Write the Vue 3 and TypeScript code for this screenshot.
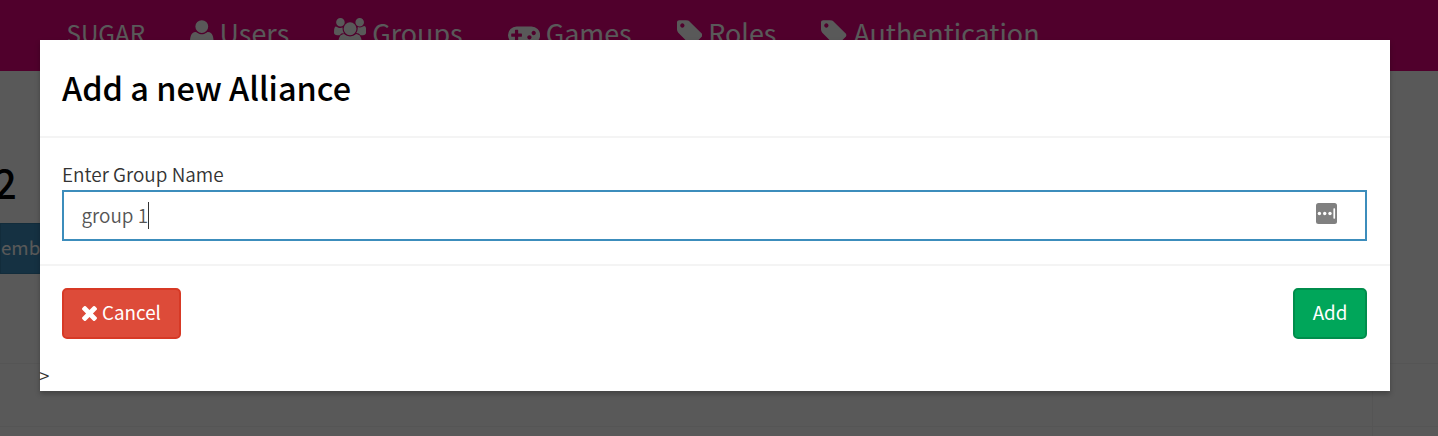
<script setup lang="ts">
import { ref } from 'vue'

interface NavItem {
  label: string
  box?: string
  width?: number
  path?: string
}

const tagPath =
  'M576 448q0-53-37.5-90.5t-90.5-37.5-90.5 37.5-37.5 90.5 37.5 90.5 90.5 37.5 90.5-37.5 37.5-90.5zm1067 576q0 53-37 90l-491 492q-39 37-91 37-53 0-90-37l-715-716q-38-37-64.5-101t-26.5-117v-416q0-52 38-90t90-38h416q53 0 117 26.5t102 64.5l715 714q37 39 37 91z'

const navItems: NavItem[] = [
  { label: 'SUGAR' },
  {
    label: 'Users',
    box: '192 0 1408 1792',
    width: 23.57,
    path: 'M1600 1405q0 120-73 189.5t-194 69.5h-874q-121 0-194-69.5t-73-189.5q0-53 3.5-103.5t14-109 26.5-108.5 43-97.5 62-81 85.5-53.5 111.5-20q9 0 42 21.5t74.5 48 108 48 133.5 21.5 133.5-21.5 108-48 74.5-48 42-21.5q61 0 111.5 20t85.5 53.5 62 81 43 97.5 26.5 108.5 14 109 3.5 103.5zm-320-893q0 159-112.5 271.5t-271.5 112.5-271.5-112.5-112.5-271.5 112.5-271.5 271.5-112.5 271.5 112.5 112.5 271.5z',
  },
  {
    label: 'Groups',
    box: '0 0 1920 1792',
    width: 32.14,
    path: 'M593 896q-162 5-265 128h-134q-82 0-138-40.5t-56-118.5q0-353 124-353 6 0 43.5 21t97.5 42.5 119 21.5q67 0 133-23-5 37-5 66 0 159 93 293zm1071 637q0 120-73 189.5t-194 69.5h-874q-121 0-194-69.5t-73-189.5q0-53 3.5-103.5t14-109 26.5-108.5 43-97.5 62-81 85.5-53.5 111.5-20q10 0 43 21.5t73 48 107 48 135 21.5 135-21.5 107-48 73-48 43-21.5q61 0 111.5 20t85.5 53.5 62 81 43 97.5 26.5 108.5 14 109 3.5 103.5zm-1024-1277q0 106-75 181t-181 75-181-75-75-181 75-181 181-75 181 75 75 181zm704 384q0 159-112.5 271.5t-271.5 112.5-271.5-112.5-112.5-271.5 112.5-271.5 271.5-112.5 271.5 112.5 112.5 271.5zm576 225q0 78-56 118.5t-138 40.5h-134q-103-123-265-128 93-134 93-293 0-29-5-66 66 23 133 23 59 0 119-21.5t97.5-42.5 43.5-21q124 0 124 353zm-128-609q0 106-75 181t-181 75-181-75-75-181 75-181 181-75 181 75 75 181z',
  },
  {
    label: 'Games',
    box: '0 0 1920 1792',
    width: 32.14,
    path: 'M832 1088v-128q0-14-9-23t-23-9h-192v-192q0-14-9-23t-23-9h-128q-14 0-23 9t-9 23v192h-192q-14 0-23 9t-9 23v128q0 14 9 23t23 9h192v192q0 14 9 23t23 9h128q14 0 23-9t9-23v-192h192q14 0 23-9t9-23zm576 64q0-53-37.5-90.5t-90.5-37.5-90.5 37.5-37.5 90.5 37.5 90.5 90.5 37.5 90.5-37.5 37.5-90.5zm256-256q0-53-37.5-90.5t-90.5-37.5-90.5 37.5-37.5 90.5 37.5 90.5 90.5 37.5 90.5-37.5 37.5-90.5zm256 128q0 212-150 362t-362 150q-192 0-338-128h-220q-146 128-338 128-212 0-362-150t-150-362 150-362 362-150h896q212 0 362 150t150 362z',
  },
  { label: 'Roles', box: '128 0 1536 1792', width: 25.71, path: tagPath },
  { label: 'Authentication', box: '128 0 1536 1792', width: 25.71, path: tagPath },
]

const groupName = ref('group 1')
</script>

<template>
  <div class="screen">
    <div class="page">
      <nav class="navbar">
        <a v-for="item in navItems" :key="item.label" class="nav-item">
          <svg v-if="item.path" class="nav-icon" :viewBox="item.box" :width="item.width" height="30">
            <path :d="item.path" />
          </svg>
          <span class="nav-label" :class="item.label.toLowerCase()">{{ item.label }}</span>
        </a>
      </nav>
      <h1 class="page-title">2</h1>
      <div class="member-button">emb</div>
      <div class="table">
        <div class="row"><span class="cell"></span></div>
        <div class="row"><span class="cell"></span></div>
      </div>
    </div>
    <div class="overlay">
      <div class="modal">
        <header class="modal-header">
          <h2 class="modal-title">Add a new Alliance</h2>
        </header>
        <div class="modal-body">
          <label class="field-label">Enter Group Name</label>
          <div class="field">
            <span class="value">{{ groupName }}</span><i class="caret"></i>
            <svg class="autofill" width="21" height="21" viewBox="0 0 21 21">
              <rect width="21" height="21" rx="2.5" fill="#808080" />
              <g fill="#fff">
                <circle cx="3.4" cy="10.5" r="1.7" />
                <circle cx="8.7" cy="10.5" r="1.7" />
                <circle cx="14" cy="10.5" r="1.7" />
                <rect x="17.4" y="5.3" width="1.7" height="10.4" rx=".6" />
              </g>
            </svg>
          </div>
        </div>
        <footer class="modal-footer">
          <button class="btn cancel">
            <svg class="times" width="15" height="15" viewBox="302 366 1188 1188">
              <path d="M1490 1322q0 40-28 68l-136 136q-28 28-68 28t-68-28l-294-294-294 294q-28 28-68 28t-68-28l-136-136q-28-28-28-68t28-68l294-294-294-294q-28-28-28-68t28-68l136-136q28-28 68-28t68 28l294 294 294-294q28-28 68-28t68 28l136 136q28 28 28 68t-28 68l-294 294 294 294q28 28 28 68z" />
            </svg>
            <span>Cancel</span>
          </button>
          <button class="btn add"><span>Add</span></button>
        </footer>
        <div class="stray">&gt;</div>
      </div>
    </div>
  </div>
</template>

<style>
body {
  margin: 0;
  overflow: hidden;
}
</style>

<style scoped>
.screen {
  position: relative;
  width: 1438px;
  height: 436px;
  overflow: hidden;
  background: #fff;
  font-family: 'Noto Sans CJK SC', 'Open Sans', sans-serif;
  color: #333;
}
.page {
  height: 436px;
}
.navbar {
  box-sizing: border-box;
  height: 71px;
  padding: 18px 0 0 67px;
  display: grid;
  grid-template-columns: 123px 144px 173.5px 169px 144.5px auto;
  background: #e5007e;
}
.nav-item {
  display: flex;
  align-items: flex-start;
  color: #fff;
  white-space: nowrap;
}
.nav-icon {
  flex: none;
  margin-right: 6px;
  fill: #fff;
}
.nav-label {
  font-size: 26.9px;
  line-height: 30px;
}
.nav-label.sugar {
  margin-left: -0.5px;
  font-size: 24.2px;
}
.nav-label.authentication {
  margin-left: 0.7px;
}
.page-title {
  margin: 88px 0 0 -6px;
  font-size: 40px;
  line-height: 46px;
  font-weight: 500;
  color: #000;
}
.member-button {
  box-sizing: border-box;
  width: 90px;
  height: 51px;
  margin-top: 18px;
  border: 1px solid #367fa9;
  background: #3c8dbc;
  color: #fff;
  font-size: 18.7px;
  line-height: 46px;
}
.table {
  margin-top: 89px;
}
.row {
  box-sizing: border-box;
  height: 63px;
  border-top: 1px solid #f2f2f2;
  display: flex;
}
.cell {
  width: 1372px;
  border-right: 1px solid #f2f2f2;
}
.overlay {
  position: absolute;
  inset: 0;
  box-sizing: border-box;
  padding: 40px 48px 45px 40px;
  background: rgba(0, 0, 0, 0.65);
}
.modal {
  height: 351px;
  background: #fff;
  box-shadow: 0 3px 5px rgba(0, 0, 0, 0.25);
}
.modal-header {
  box-sizing: border-box;
  height: 98px;
  padding: 27px 22px 0;
  border-bottom: 2px solid #f4f4f4;
}
.modal-title {
  margin: 0;
  font-size: 32.45px;
  line-height: 40px;
  font-weight: 500;
  color: #000;
}
.modal-body {
  box-sizing: border-box;
  height: 128px;
  padding: 22px 23px 0 22px;
  border-bottom: 2px solid #f4f4f4;
}
.field-label {
  display: block;
  height: 30px;
  font-size: 18.95px;
  line-height: 28px;
  font-weight: 350;
}
.field {
  box-sizing: border-box;
  height: 51px;
  padding: 0 28px 0 17.5px;
  display: flex;
  align-items: center;
  border: 2px solid #3c8dbc;
  font-size: 18.95px;
  line-height: 30px;
  color: #555;
}
.value {
  margin-top: -2px;
  font-weight: 350;
}
.caret {
  width: 1px;
  height: 27px;
  background: #333;
}
.autofill {
  margin: 0 0 5px auto;
}
.modal-footer {
  height: 51px;
  padding: 22px 23px 0 22px;
  display: flex;
  justify-content: space-between;
}
.btn {
  box-sizing: border-box;
  height: 51px;
  padding: 0;
  display: flex;
  align-items: center;
  justify-content: center;
  border-radius: 5px;
  color: #fff;
  font-family: inherit;
  font-size: 18.8px;
  line-height: 30px;
}
.btn span {
  margin-top: -3px;
}
.cancel {
  width: 119px;
  background: #dd4b39;
  border: 2px solid #d73925;
}
.add {
  width: 74px;
  background: #00a65a;
  border: 2px solid #008d4c;
}
.times {
  margin: -1px 5px 0 0;
  fill: #fff;
}
.stray {
  margin: 22px 0 0 -1px;
  font-size: 18.9px;
  font-weight: 350;
  line-height: 28px;
}
</style>
